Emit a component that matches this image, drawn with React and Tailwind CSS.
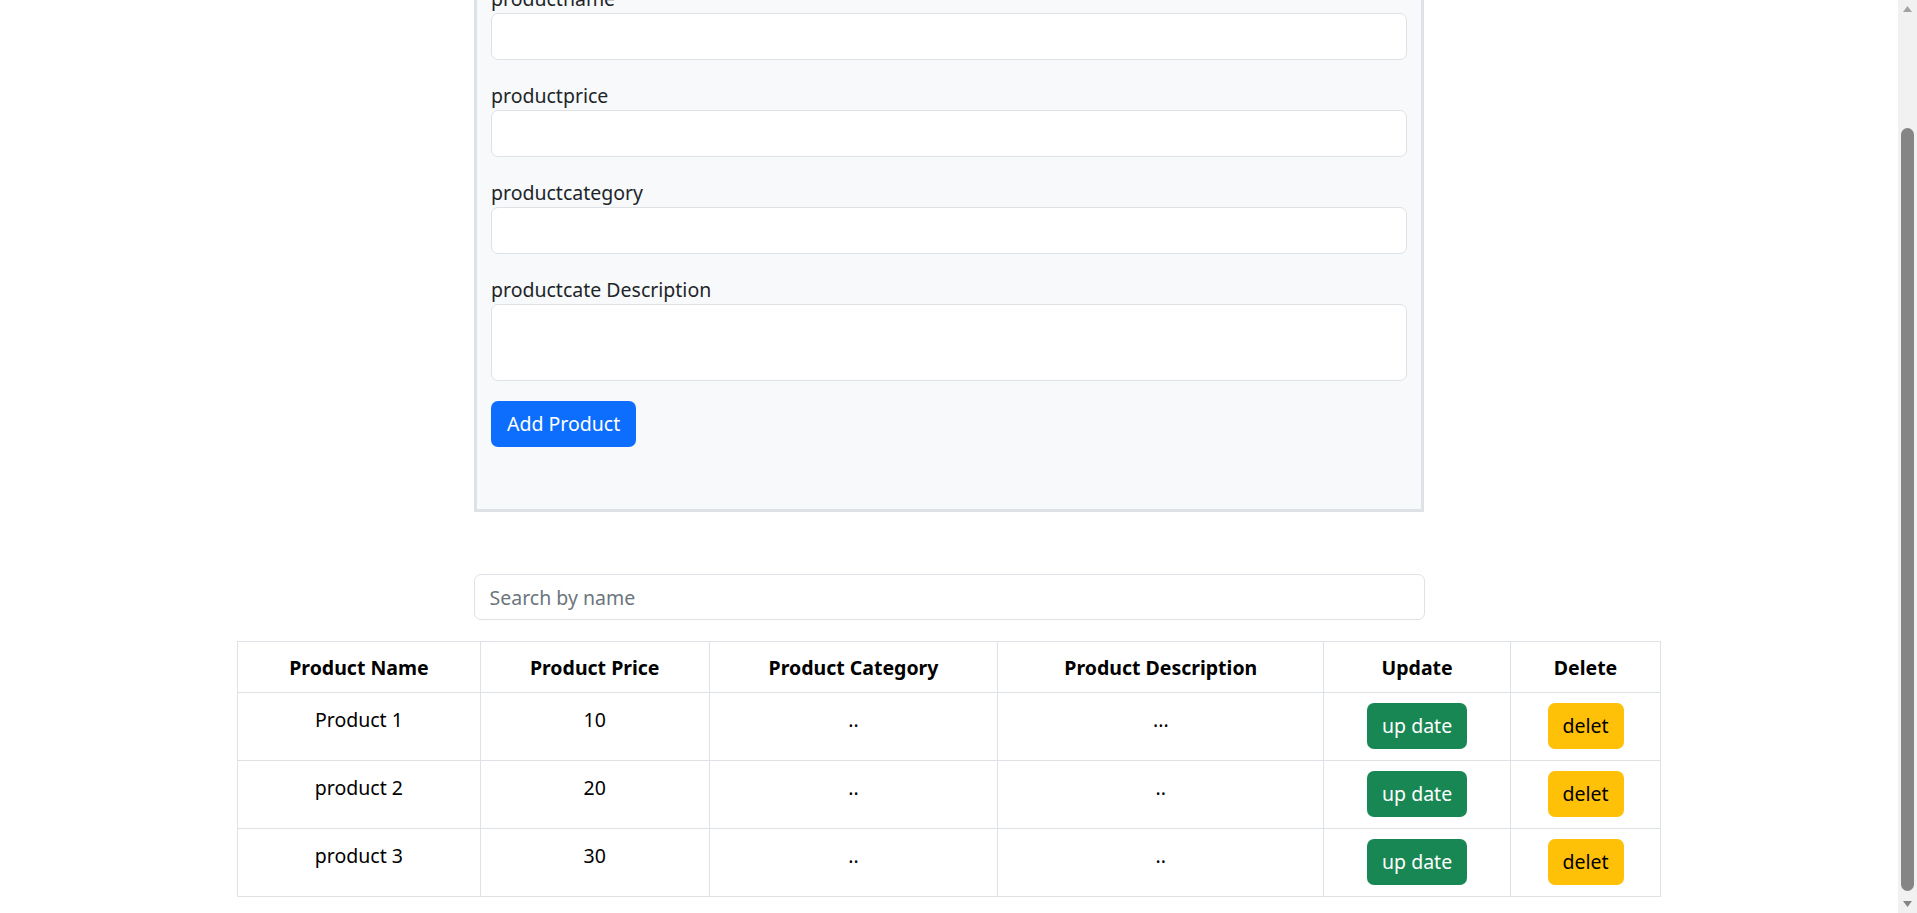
import React, { useEffect, useRef } from "react";

const font = { fontFamily: '"Segoe UI", "Noto Sans", "Open Sans", sans-serif' };

const rows = [
  ["Product 1", "10", "..", "..."],
  ["product 2", "20", "..", ".."],
  ["product 3", "30", "..", ".."],
];

function Field({ label, tall }) {
  return (
    <div className="mb-[21px]">
      <label className="block leading-[29px] text-[#212529]">{label}</label>
      {tall ? (
        <textarea className="block w-full h-[77px] rounded-[7px] border border-[#dee2e6] bg-white resize-none outline-none" />
      ) : (
        <input className="block w-full h-[47px] rounded-[7px] border border-[#dee2e6] bg-white outline-none" />
      )}
    </div>
  );
}

export default function App() {
  const ref = useRef(null);
  useEffect(() => {
    if (ref.current) ref.current.scrollTop = ref.current.scrollHeight;
  }, []);
  return (
    <div className="flex h-[913px] bg-white">
      <div ref={ref} className="flex-1 h-[913px] overflow-y-scroll text-[19.5px] text-[#212529]" style={font}>
        <div className="pt-[140px] pb-[16px]">
          <div className="mx-auto w-[950px] border-[3px] border-[#dee2e6] bg-[#f8f9fa] px-[14px] pt-[20px] pb-[62px]">
            <Field label="productname" />
            <Field label="productprice" />
            <Field label="productcategory" />
            <Field label="productcate Description" tall />
            <button className="h-[46px] px-[16px] rounded-[7px] bg-[#0d6efd] text-white mt-[-1px]">Add Product</button>
          </div>
          <div className="mx-auto w-[951px] mt-[62px]">
            <input
              placeholder="Search by name"
              className="block w-full h-[46px] rounded-[7px] border border-[#dee2e6] bg-white px-[15px] outline-none placeholder:text-[#6c757d]"
            />
          </div>
          <table className="mx-auto mt-[21px] w-[1424px] border-collapse text-center">
            <thead>
              <tr className="font-bold text-black">
                {[
                  ["Product Name", "w-[243px]"],
                  ["Product Price", "w-[229px]"],
                  ["Product Category", "w-[289px]"],
                  ["Product Description", "w-[326px]"],
                  ["Update", "w-[187px]"],
                  ["Delete", "w-[150px]"],
                ].map(([h, w]) => (
                  <th key={h} className={`${w} border border-[#dee2e6] h-[51px] leading-[29px]`}>{h}</th>
                ))}
              </tr>
            </thead>
            <tbody>
              {rows.map((r) => (
                <tr key={r[0]}>
                  {r.map((c, i) => (
                    <td key={i} className="border border-[#dee2e6] align-top pt-[12px] h-[68px] leading-[29px] text-black">{c}</td>
                  ))}
                  <td className="border border-[#dee2e6] align-top pt-[10px]">
                    <button className="h-[46px] w-[100px] rounded-[7px] bg-[#198754] text-white">up date</button>
                  </td>
                  <td className="border border-[#dee2e6] align-top pt-[10px]">
                    <button className="h-[46px] w-[76px] rounded-[7px] bg-[#ffc107] text-black">delet</button>
                  </td>
                </tr>
              ))}
            </tbody>
          </table>
        </div>
      </div>
      <div className="w-[19px] h-[913px] bg-[#f1f1f1] flex flex-col items-center">
        <div className="h-[18px] flex items-center justify-center">
          <svg width="9" height="6" viewBox="0 0 9 6"><path d="M4.5 0L9 6H0z" fill="#a3a3a3" /></svg>
        </div>
        <div className="flex-1 w-full px-[3px] flex flex-col">
          <div className="h-[110px]" />
          <div className="flex-1 rounded-full bg-[#858585]" />
          <div className="h-[4px]" />
        </div>
        <div className="h-[18px] flex items-center justify-center">
          <svg width="9" height="6" viewBox="0 0 9 6"><path d="M0 0H9L4.5 6z" fill="#858585" /></svg>
        </div>
      </div>
    </div>
  );
}
